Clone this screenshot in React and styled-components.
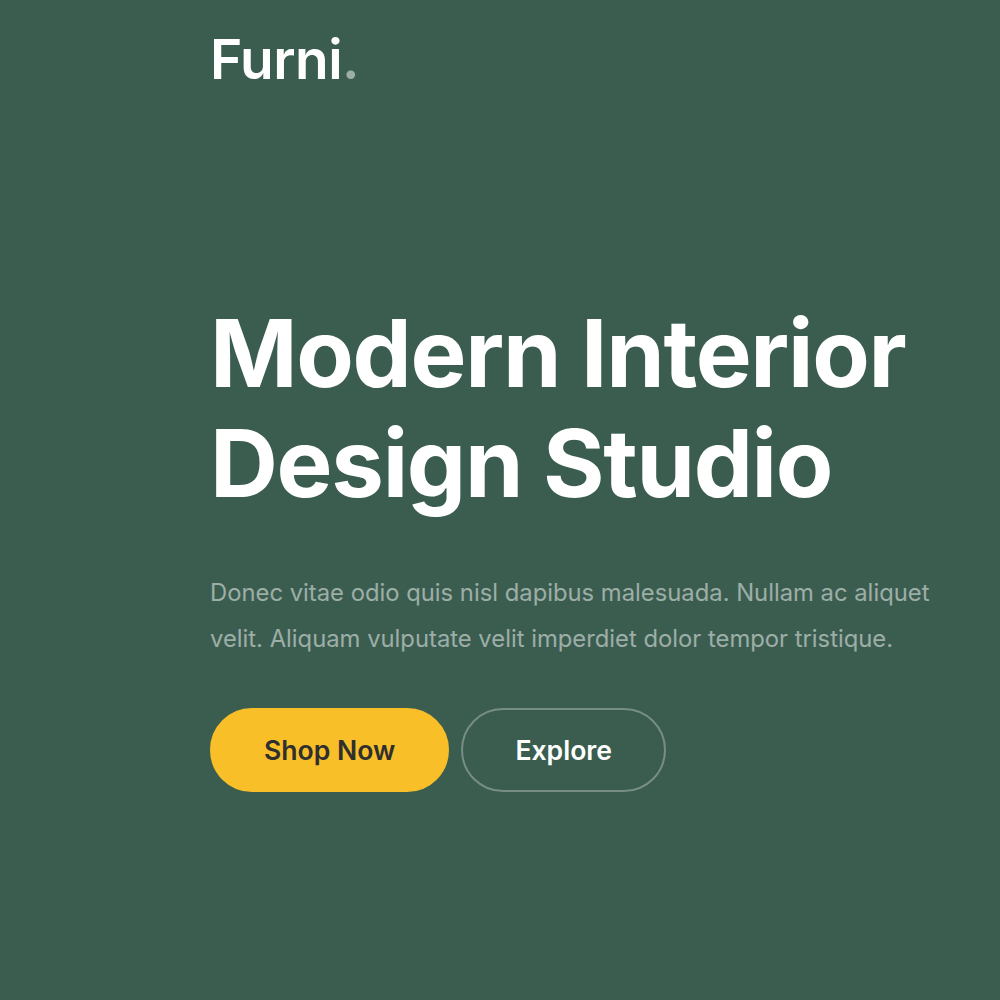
import React from "react";
import styled, { createGlobalStyle } from "styled-components";

const GlobalStyle = createGlobalStyle`
  html, body {
    margin: 0;
    padding: 0;
    background: #3b5d50;
  }
  body {
    font-family: Inter, "Noto Sans", sans-serif;
    -webkit-font-smoothing: antialiased;
  }
`;

const Page = styled.div`
  min-height: 1000px;
  background: #3b5d50;
  padding-left: 210px;
  box-sizing: border-box;
`;

const Header = styled.header`
  padding-top: 24px;
  height: 70px;
`;

const Logo = styled.a`
  font-size: 55px;
  font-weight: 600;
  color: #fff;
  text-decoration: none;
  line-height: 70px;
  letter-spacing: -0.5px;

  span {
    color: rgba(255, 255, 255, 0.5);
  }
`;

const Hero = styled.section`
  padding-top: 204px;
  max-width: 740px;
`;

const Title = styled.h1`
  margin: 0;
  color: #fff;
  font-size: 94px;
  font-weight: 700;
  line-height: 110px;
  letter-spacing: -1.3px;
`;

const Intro = styled.p`
  margin: 52px 0 0;
  color: rgba(255, 255, 255, 0.5);
  font-size: 23.8px;
  line-height: 46px;
  max-width: 740px;
`;

const Actions = styled.div`
  display: flex;
  gap: 12px;
  margin-top: 46px;
`;

const Button = styled.a`
  display: inline-flex;
  align-items: center;
  justify-content: center;
  box-sizing: border-box;
  height: 84px;
  padding: 0 ${(p) => (p.outline ? "52px" : "52px")};
  border-radius: 42px;
  font-size: 26.6px;
  font-weight: 600;
  text-decoration: none;
  background: ${(p) => (p.outline ? "transparent" : "#f9bf29")};
  color: ${(p) => (p.outline ? "#fff" : "#2f2f2f")};
  border: 2px solid ${(p) => (p.outline ? "rgba(255,255,255,0.3)" : "#f9bf29")};
`;

export default function App() {
  return (
    <>
      <GlobalStyle />
      <Page>
        <Header>
          <Logo href="#">
            Furni<span>.</span>
          </Logo>
        </Header>
        <Hero>
          <Title>
            Modern Interior
            <br />
            Design Studio
          </Title>
          <Intro>
            Donec vitae odio quis nisl dapibus malesuada. Nullam ac aliquet
            velit. Aliquam vulputate velit imperdiet dolor tempor tristique.
          </Intro>
          <Actions>
            <Button href="#">Shop Now</Button>
            <Button href="#" outline>
              Explore
            </Button>
          </Actions>
        </Hero>
      </Page>
    </>
  );
}
